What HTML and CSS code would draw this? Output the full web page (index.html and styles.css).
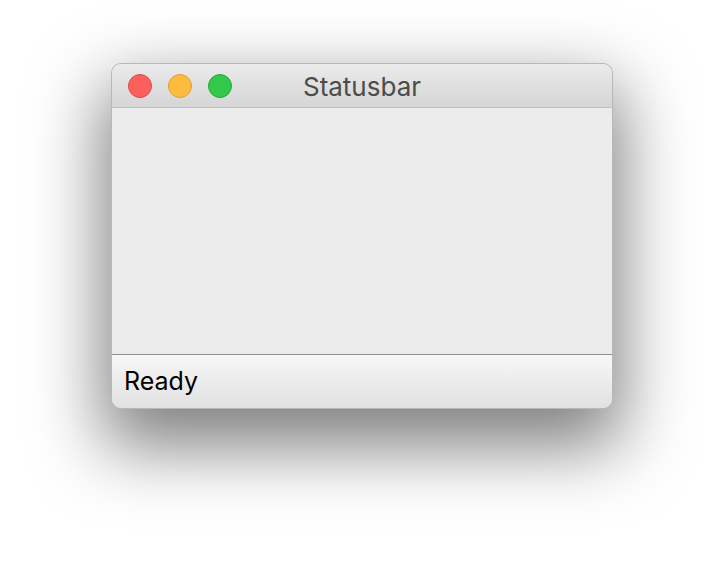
FILE: index.html
```html
<!DOCTYPE html>
<html>
<head>
<meta charset="utf-8">
<link rel="stylesheet" href="styles.css">
</head>
<body>
<div class="window">
  <div class="titlebar">
    <div class="lights">
      <span class="light red"></span>
      <span class="light yellow"></span>
      <span class="light green"></span>
    </div>
    <div class="title">Statusbar</div>
  </div>
  <div class="content"></div>
  <div class="statusbar">Ready</div>
</div>
</body>
</html>
```
FILE: styles.css
```css
html, body {
  margin: 0;
  background: #ffffff;
}
body {
  width: 724px;
  height: 568px;
  overflow: hidden;
  padding: 63px 0 0 111px;
  box-sizing: border-box;
  font-family: Inter, "Liberation Sans", sans-serif;
}
.window {
  width: 502px;
  height: 346px;
  box-sizing: border-box;
  border-radius: 10px;
  border: 1px solid rgba(0,0,0,0.22);
  display: flex;
  flex-direction: column;
  overflow: hidden;
  box-shadow: 0 30px 70px 8px rgba(0,0,0,0.5);
  background: #ececec;
}
.titlebar {
  height: 44px;
  flex: none;
  box-sizing: border-box;
  border-bottom: 1px solid #c1c1c1;
  background: linear-gradient(#ebebeb, #d5d5d5);
  display: flex;
  align-items: center;
  position: relative;
}
.lights {
  display: flex;
  gap: 16px;
  padding-left: 16px;
}
.light {
  width: 24px;
  height: 24px;
  border-radius: 50%;
  box-sizing: border-box;
}
.red { background: #fc605c; border: 1px solid #de4a47; }
.yellow { background: #fdbc40; border: 1px solid #dea033; }
.green { background: #34c84a; border: 1px solid #28a935; }
.title {
  position: absolute;
  left: 0;
  right: 0;
  top: 0;
  bottom: 0;
  display: flex;
  align-items: center;
  justify-content: center;
  font-size: 26px;
  color: #4c4c4c;
  padding-top: 2px;
}
.content {
  flex: 1;
  background: #ececec;
}
.statusbar {
  height: 54px;
  flex: none;
  box-sizing: border-box;
  border-top: 1px solid #8f8f8f;
  background: linear-gradient(#f7f7f7, #e1e1e1);
  display: flex;
  align-items: center;
  padding-left: 12px;
  padding-bottom: 1px;
  font-size: 25px;
  color: #000;
}
```
